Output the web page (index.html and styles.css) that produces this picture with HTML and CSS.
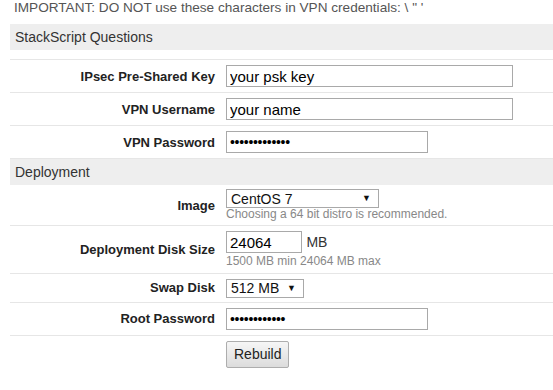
FILE: index.html
```html
<!DOCTYPE html>
<html lang="en">
<head>
  <meta charset="UTF-8">
  <meta name="viewport" content="width=device-width, initial-scale=1.0">
  <title>Rebuild</title>
  <link rel="stylesheet" href="styles.css">
</head>
<body>
<p class="notice">IMPORTANT: DO NOT use these characters in VPN credentials: \ " '</p>

<div class="section">
  <h3 class="section-title">StackScript Questions</h3>
  <table class="form form-first">
    <tr>
      <th>IPsec Pre-Shared Key</th>
      <td><input type="text" class="field field-wide" value="your psk key"></td>
    </tr>
    <tr>
      <th>VPN Username</th>
      <td><input type="text" class="field field-wide" value="your name"></td>
    </tr>
    <tr>
      <th>VPN Password</th>
      <td><input type="password" class="field field-pass" value="secretsecret1"></td>
    </tr>
  </table>
</div>

<div class="section">
  <h3 class="section-title">Deployment</h3>
  <table class="form">
    <tr>
      <th>Image</th>
      <td class="tight">
        <span class="select-wrap select-image">
          <select class="dropdown">
            <option>CentOS 7</option>
            <option>Debian 9</option>
            <option>Ubuntu 16.04 LTS</option>
          </select>
          <span class="arrow">&#9660;</span>
        </span>
        <div class="hint">Choosing a 64 bit distro is recommended.</div>
      </td>
    </tr>
    <tr>
      <th>Deployment Disk Size</th>
      <td>
        <input type="text" class="field field-size" value="24064"> <span class="unit">MB</span>
        <div class="hint hint-spaced">1500 MB min 24064 MB max</div>
      </td>
    </tr>
    <tr>
      <th>Swap Disk</th>
      <td class="tight">
        <span class="select-wrap select-swap">
          <select class="dropdown">
            <option>512 MB</option>
            <option>256 MB</option>
          </select>
          <span class="arrow">&#9660;</span>
        </span>
      </td>
    </tr>
    <tr>
      <th>Root Password</th>
      <td><input type="password" class="field field-pass" value="rootpasswrd1"></td>
    </tr>
    <tr>
      <th></th>
      <td><button class="btn-rebuild">Rebuild</button></td>
    </tr>
  </table>
</div>
</body>
</html>
```

FILE: styles.css
```css
body {
  font-family: "Liberation Sans", Arial, sans-serif;
  margin: 0;
  padding: 0 0 0 10px;
  background-color: #fff;
  color: #222;
}
.notice {
  margin: 0 0 8px 4px;
  font-size: 13.6px;
  line-height: 16px;
  color: #555;
}
.section-title {
  margin: 0;
  padding: 0 5px;
  height: 26px;
  line-height: 26px;
  font-size: 14px;
  font-weight: normal;
  color: #333;
  background-color: #eee;
}
.form {
  width: 100%;
  border-collapse: collapse;
}
.form-first {
  margin-top: 9px;
  border-top: 1px solid #e6e6e6;
  border-bottom: 1px solid #e6e6e6;
}
.form tr + tr {
  border-top: 1px solid #e6e6e6;
}
.form th {
  width: 201px;
  padding: 5px 7px 5px 4px;
  text-align: right;
  vertical-align: middle;
  font-size: 13px;
  font-weight: bold;
  color: #222;
  white-space: nowrap;
}
.form td {
  padding: 5px 4px;
  vertical-align: middle;
}
.form td.tight {
  padding-top: 4px;
  padding-bottom: 4px;
}
.field {
  box-sizing: border-box;
  height: 22px;
  margin: 0;
  padding: 0 3px;
  border: 1px solid #a9a9a9;
  border-radius: 0;
  font-family: "Liberation Sans", Arial, sans-serif;
  font-size: 15px;
  color: #000;
  vertical-align: middle;
}
.field-wide {
  width: 287px;
}
.field-pass {
  width: 202px;
  font-size: 14px;
  letter-spacing: -0.3px;
}
.field-size {
  width: 76px;
}
.unit {
  font-size: 14px;
  color: #333;
  vertical-align: middle;
}
.hint {
  font-size: 12px;
  line-height: 13px;
  color: #888;
}
.hint-spaced {
  margin-top: 2px;
}
.select-wrap {
  position: relative;
  display: inline-block;
  vertical-align: middle;
}
.dropdown {
  appearance: none;
  -webkit-appearance: none;
  box-sizing: border-box;
  width: 100%;
  height: 19px;
  margin: 0;
  padding: 0 20px 0 4px;
  border: 1px solid #a9a9a9;
  border-radius: 0;
  background-color: #fff;
  font-family: "Liberation Sans", Arial, sans-serif;
  font-size: 14px;
  color: #111;
  display: block;
}
.select-image {
  width: 153px;
}
.select-swap {
  width: 78px;
}
.arrow {
  position: absolute;
  right: 8px;
  top: 4px;
  font-size: 9px;
  line-height: 10px;
  color: #111;
  pointer-events: none;
}
.btn-rebuild {
  height: 27px;
  padding: 0 7px;
  border: 1px solid #adadad;
  border-radius: 2px;
  background: linear-gradient(#f6f6f6, #dcdcdc);
  font-family: "Liberation Sans", Arial, sans-serif;
  font-size: 14px;
  color: #222;
  cursor: pointer;
}
```
